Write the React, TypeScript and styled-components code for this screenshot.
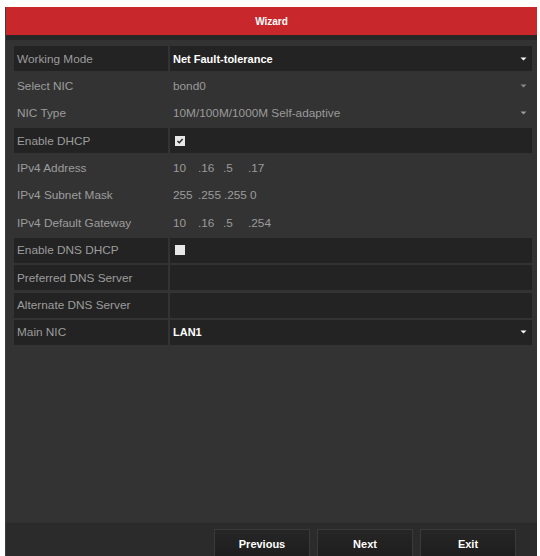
import React from 'react'
import styled, { createGlobalStyle } from 'styled-components'

const GlobalStyle = createGlobalStyle`
  html, body {
    margin: 0;
    padding: 0;
    background: #ffffff;
  }
  #root {
    height: 556px;
    overflow: hidden;
  }
`

const Page = styled.div`
  height: 556px;
  padding: 7px 3px 0 5px;
  box-sizing: border-box;
  font-family: 'Liberation Sans', Arial, sans-serif;
`

const Panel = styled.div`
  display: flex;
  flex-direction: column;
  height: 560px;
  background: #333333;
  border-left: 1px solid #3d3d3d;
`

const Header = styled.div`
  display: flex;
  align-items: center;
  justify-content: center;
  height: 28px;
  background: #c8272b;
  border-bottom: 5px solid #272727;
  color: #ffffff;
  font-size: 10px;
  font-weight: bold;
`

const Content = styled.div`
  flex: 1;
  display: flex;
  flex-direction: column;
  gap: 2.4px;
  padding: 6px 5px 0 8px;
`

const Row = styled.div<{ $dark?: boolean }>`
  display: grid;
  grid-template-columns: 154px 1fr;
  gap: 2px;
  height: 25px;

  > div {
    background: ${(p) => (p.$dark ? '#232323' : 'transparent')};
  }
`

const Label = styled.div`
  display: flex;
  align-items: center;
  padding-left: 3px;
  color: #9d9d9d;
  font-size: 11.8px;
  white-space: nowrap;
`

const Value = styled.div<{ $bright?: boolean }>`
  display: flex;
  align-items: center;
  padding: 0 5px 0 3px;
  color: ${(p) => (p.$bright ? '#ffffff' : '#9b9b9b')};
  font-size: ${(p) => (p.$bright ? '11px' : '11.8px')};
  font-weight: ${(p) => (p.$bright ? 'bold' : 'normal')};
`

const ValueText = styled.span`
  flex: 1;
  white-space: nowrap;
`

const IpSegment = styled.span`
  display: inline-block;
  min-width: 25px;
  padding-right: 3px;
  box-sizing: border-box;
`

const Checkbox = styled.span`
  display: flex;
  align-items: center;
  justify-content: center;
  width: 10px;
  height: 10px;
  margin-left: 2px;
  background: #e8e8e8;
`

const Footer = styled.div`
  display: flex;
  justify-content: flex-end;
  gap: 7px;
  height: 38px;
  padding: 6px 21px 0 0;
  background: #2b2b2b;
  border-top: 1px solid #303030;
`

const Button = styled.button`
  width: 96px;
  height: 32px;
  padding: 0 0 4px;
  border: 1px solid #3a3a3a;
  border-bottom: none;
  background: linear-gradient(#262626, #1c1c1c);
  color: #ffffff;
  font-family: 'Liberation Sans', Arial, sans-serif;
  font-size: 11px;
  font-weight: bold;
`

function Arrow({ color }: { color: string }) {
  return (
    <svg width="7" height="4" viewBox="0 0 7 4">
      <path d="M0.5 0.5 L3.5 3.5 L6.5 0.5 Z" fill={color} />
    </svg>
  )
}

function Check() {
  return (
    <svg width="8" height="8" viewBox="0 0 8 8">
      <path d="M1.5 4 L3.3 5.8 L6.6 2" stroke="#222" strokeWidth="1.4" fill="none" />
    </svg>
  )
}

function Ip({ parts }: { parts: string[] }) {
  return (
    <ValueText>
      {parts.map((part, i) => (
        <IpSegment key={i}>{part}</IpSegment>
      ))}
    </ValueText>
  )
}

export default function App() {
  return (
    <Page>
      <GlobalStyle />
      <Panel>
        <Header>Wizard</Header>
        <Content>
          <Row $dark>
            <Label>Working Mode</Label>
            <Value $bright>
              <ValueText>Net Fault-tolerance</ValueText>
              <Arrow color="#ffffff" />
            </Value>
          </Row>
          <Row>
            <Label>Select NIC</Label>
            <Value>
              <ValueText>bond0</ValueText>
              <Arrow color="#8a8a8a" />
            </Value>
          </Row>
          <Row>
            <Label>NIC Type</Label>
            <Value>
              <ValueText>10M/100M/1000M Self-adaptive</ValueText>
              <Arrow color="#9b9b9b" />
            </Value>
          </Row>
          <Row $dark>
            <Label>Enable DHCP</Label>
            <Value>
              <Checkbox>
                <Check />
              </Checkbox>
            </Value>
          </Row>
          <Row>
            <Label>IPv4 Address</Label>
            <Value>
              <Ip parts={['10', '.16', '.5', '.17']} />
            </Value>
          </Row>
          <Row>
            <Label>IPv4 Subnet Mask</Label>
            <Value>
              <Ip parts={['255', '.255', '.255', '0']} />
            </Value>
          </Row>
          <Row>
            <Label>IPv4 Default Gateway</Label>
            <Value>
              <Ip parts={['10', '.16', '.5', '.254']} />
            </Value>
          </Row>
          <Row $dark>
            <Label>Enable DNS DHCP</Label>
            <Value>
              <Checkbox />
            </Value>
          </Row>
          <Row $dark>
            <Label>Preferred DNS Server</Label>
            <Value />
          </Row>
          <Row $dark>
            <Label>Alternate DNS Server</Label>
            <Value />
          </Row>
          <Row $dark>
            <Label>Main NIC</Label>
            <Value $bright>
              <ValueText>LAN1</ValueText>
              <Arrow color="#ffffff" />
            </Value>
          </Row>
        </Content>
        <Footer>
          <Button>Previous</Button>
          <Button>Next</Button>
          <Button>Exit</Button>
        </Footer>
      </Panel>
    </Page>
  )
}
